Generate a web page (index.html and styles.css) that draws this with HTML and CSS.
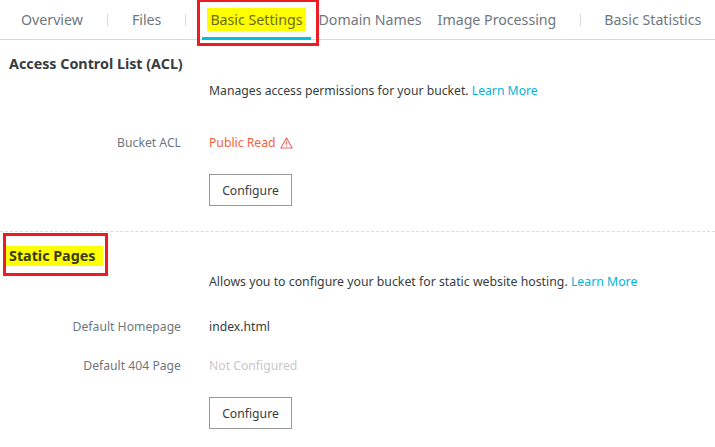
FILE: index.html
```html
<!DOCTYPE html>
<html lang="en">
<head>
  <meta charset="UTF-8" />
  <title>Bucket Settings</title>
  <link rel="stylesheet" href="styles.css">
</head>
<body>

  <div class="tabs">
    <a class="tab tab-overview">Overview</a>
    <span class="tab-sep sep-one"></span>
    <a class="tab tab-files">Files</a>
    <span class="tab-sep sep-two"></span>
    <a class="tab tab-basic active"><span class="marker">Basic Settings</span></a>
    <a class="tab tab-domain">Domain Names</a>
    <a class="tab tab-image">Image Processing</a>
    <span class="tab-sep sep-three"></span>
    <a class="tab tab-stats">Basic Statistics</a>
    <!-- Red annotation round the active tab -->
    <div class="note-box note-tab"></div>
  </div>

  <div class="section section-acl">
    <h2>Access Control List (ACL)</h2>
    <p class="intro">Manages access permissions for your bucket. <a class="link">Learn More</a></p>
    <div class="row row-acl">
      <label>Bucket ACL</label>
      <div class="value danger">
        Public Read
        <svg class="warn-icon" viewBox="0 0 13 12" width="13" height="12">
          <path d="M6.5 1 L12.2 11 H0.8 Z" fill="none" stroke="#f0655f" stroke-width="1.1" stroke-linejoin="round"/>
          <path d="M6.5 4.2 V7.6 M6.5 8.4 V9.6" fill="none" stroke="#f0655f" stroke-width="1.1"/>
        </svg>
      </div>
    </div>
    <button class="btn">Configure</button>
  </div>

  <div class="section section-static">
    <h2><span class="marker">Static Pages</span></h2>
    <div class="note-box note-title"></div>
    <p class="intro">Allows you to configure your bucket for static website hosting. <a class="link">Learn More</a></p>
    <div class="row row-home">
      <label>Default Homepage</label>
      <div class="value">index.html</div>
    </div>
    <div class="row row-404">
      <label>Default 404 Page</label>
      <div class="value muted">Not Configured</div>
    </div>
    <button class="btn">Configure</button>
  </div>

</body>
</html>
```

FILE: styles.css
```css
body {
  margin: 0;
  font-family: "Noto Sans", "Open Sans", sans-serif;
  font-size: 12.2px;
  color: #373d41;
  background: #fff;
  overflow: hidden;
}

/* Tabs */
.tabs {
  position: relative;
  display: flex;
  align-items: center;
  height: 39px;
  border-bottom: 1px solid #d9d9d9;
  padding-left: 21px;
  font-size: 14.2px;
  color: #6e7780;
  white-space: nowrap;
}

.tab-sep {
  width: 1px;
  height: 12px;
  background: #d9d9d9;
}

.sep-one { margin-left: 24px; }
.tab-files { margin-left: 24px; }
.sep-two { margin-left: 24px; }
.tab-basic { margin-left: 24px; color: #6b6b1e; }
.tab-domain { margin-left: 16px; }
.tab-image { margin-left: 16px; }
.sep-three { margin-left: 24px; }
.tab-stats { margin-left: 23px; }

.tab.active::after {
  content: "";
  position: absolute;
  left: 202px;
  top: 37px;
  width: 109px;
  height: 3px;
  background: #00c1de;
}

.marker {
  background: #ffff00;
  padding: 2px 3px;
  margin: 0 -3px;
}

h2 .marker {
  padding: 0 8px 1px 5px;
  margin-left: -5px;
}

/* Red annotation boxes */
.note-box {
  position: absolute;
  border: 3px solid #ed1c24;
}

.note-tab {
  left: 197px;
  top: 0;
  width: 116px;
  height: 41px;
  border-top-width: 2px;
}

.note-title {
  left: 3px;
  top: 1px;
  width: 99px;
  height: 37px;
}

/* Sections */
.section {
  position: relative;
}

.section-acl {
  height: 191px;
  border-bottom: 1px dashed #dcdcdc;
}

.section-static {
  height: 200px;
}

h2 {
  margin: 0;
  padding-left: 9px;
  font-size: 14.3px;
  font-weight: bold;
  color: #373d41;
}

.section-acl h2 { padding-top: 14px; }
.section-static h2 { padding-top: 14px; color: #3a3a10; }

.intro {
  margin: 9px 0 0 209px;
}

.section-static .intro {
  margin-top: 8px;
  font-size: 12.3px;
}

.link {
  color: #00b4d8;
}

.row {
  display: flex;
  align-items: center;
}

.row label {
  width: 181px;
  text-align: right;
  color: #6e7780;
}

.value {
  margin-left: 28px;
}

.row-acl { margin-top: 35px; }
.row-home { margin-top: 28px; }
.row-404 { margin-top: 22px; }

.danger {
  display: flex;
  align-items: center;
  gap: 4px;
  color: #f4623a;
}

.muted {
  color: #c8c8c8;
}

.btn {
  display: block;
  width: 83px;
  height: 32px;
  margin: 23px 0 0 209px;
  padding: 0;
  background: #fff;
  border: 1px solid #999;
  font-family: inherit;
  font-size: 12.2px;
  color: #373d41;
}
```
